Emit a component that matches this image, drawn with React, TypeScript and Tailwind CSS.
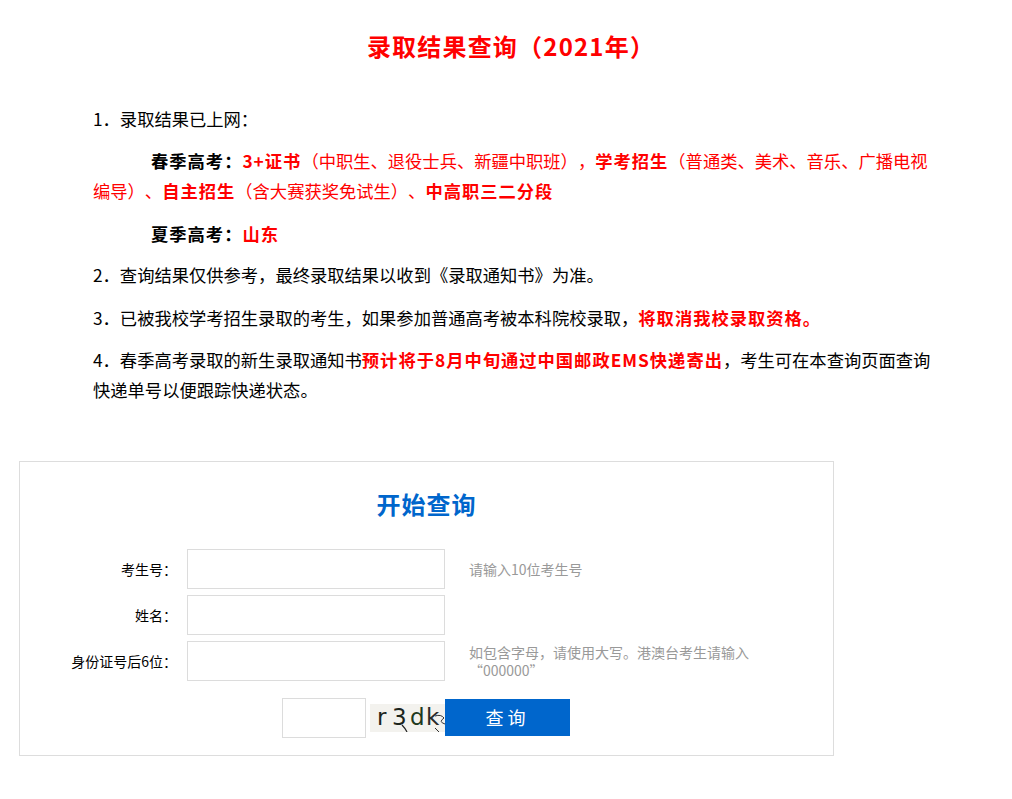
import React from "react";

/** --- Small pieces --- */
function Red({ children, bold }: { children: React.ReactNode; bold?: boolean }) {
  return (
    <span className={bold ? "font-bold tracking-[1px] text-[#ff0000]" : "text-[#ff0000]"}>{children}</span>
  );
}

function Field({ label, hint }: { label: string; hint?: React.ReactNode }) {
  return (
    <div className="flex items-center">
      <div className="w-[157px] text-right text-[14px] text-black">{label}</div>
      <input className="ml-[10px] h-[40px] w-[258px] border border-[#dcdcdc] bg-white outline-none" />
      <div className="ml-[24px] w-[320px] text-[14px] leading-[18px] text-[#999]">{hint}</div>
    </div>
  );
}

function Captcha() {
  return (
    <div className="relative ml-[4px] mt-[6px] h-[28px] w-[75px] overflow-hidden bg-[#f3f2ee]">
      <span className="absolute left-[7px] top-[-4px] font-['DejaVu_Sans',sans-serif] text-[23px] text-[#1c241c]">r</span>
      <span className="absolute left-[22px] top-[-4px] font-['DejaVu_Sans',sans-serif] text-[23px] text-[#1c241c]">3</span>
      <span className="absolute left-[40px] top-[-4px] font-['DejaVu_Sans',sans-serif] text-[23px] text-[#1e3a1e]">d</span>
      <span className="absolute left-[56px] top-[-4px] font-['DejaVu_Sans',sans-serif] text-[23px] text-[#2a2a2a]">k</span>
      <svg className="absolute left-0 top-0" width="75" height="28" viewBox="0 0 75 28">
        <path d="M32 21 Q35 24 37 28" stroke="#222" strokeWidth="1.2" fill="none" />
        <path d="M65 12 Q71 10 74 14 Q68 18 75 20" stroke="#333" strokeWidth="1" fill="none" />
        <path d="M65 24 Q67 26 69 28" stroke="#333" strokeWidth="1" fill="none" />
      </svg>
    </div>
  );
}

/** --- Page --- */
export default function App() {
  return (
    <div className="min-h-[799px] w-[1012px] bg-white font-['Noto_Sans_CJK_SC',sans-serif] text-black [text-spacing-trim:space-all]">
      <h1 className="pl-[10px] pt-[30px] text-center text-[24px] font-bold leading-[32px] tracking-[1.2px] text-[#ff0000]">
        录取结果查询（2021年）
      </h1>

      <div className="ml-[93px] mt-[42px] w-[842px] text-[17.3px] leading-[30px]">
        <p className="mb-[12px]">1．录取结果已上网：</p>
        <p className="mb-[13px] indent-[58px]">
          <b className="tracking-[1px]">春季高考：</b>
          <Red bold>3+证书</Red>
          <Red>（中职生、退役士兵、新疆中职班），</Red>
          <Red bold>学考招生</Red>
          <Red>（普通类、美术、音乐、广播电视编导）、</Red>
          <Red bold>自主招生</Red>
          <Red>（含大赛获奖免试生）、</Red>
          <Red bold>中高职三二分段</Red>
        </p>
        <p className="mb-[11px] indent-[58px]">
          <b className="tracking-[1px]">夏季高考：</b>
          <Red bold>山东</Red>
        </p>
        <p className="mb-[13px]">2．查询结果仅供参考，最终录取结果以收到《录取通知书》为准。</p>
        <p className="mb-[12px]">
          3．已被我校学考招生录取的考生，如果参加普通高考被本科院校录取，
          <Red bold>将取消我校录取资格。</Red>
        </p>
        <p>
          4．春季高考录取的新生录取通知书
          <Red bold>预计将于8月中旬通过中国邮政EMS快递寄出</Red>
          ，考生可在本查询页面查询快递单号以便跟踪快递状态。
        </p>
      </div>

      {/* Query box */}
      <div className="ml-[19px] mt-[56px] w-[815px] border border-[#dddddd] pb-[17px] pt-[26px]">
        <h2 className="text-center text-[24px] font-bold leading-[32px] tracking-[1px] text-[#0066cc]">开始查询</h2>

        <div className="mt-[29px] flex flex-col gap-[6px]">
          <Field label="考生号：" hint="请输入10位考生号" />
          <Field label="姓名：" />
          <Field
            label="身份证号后6位："
            hint={
              <>
                <span className="block">如包含字母，请使用大写。港澳台考生请输入</span>
                <span className="block">“000000”</span>
              </>
            }
          />
        </div>

        <div className="mt-[17px] flex items-start pl-[262px]">
          <input className="h-[40px] w-[84px] border border-[#dcdcdc] bg-white outline-none" />
          <Captcha />
          <button className="mt-[1px] h-[37px] w-[125px] bg-[#0066cc] text-[18px] tracking-[4px] text-white">
            查询
          </button>
        </div>
      </div>
    </div>
  );
}
